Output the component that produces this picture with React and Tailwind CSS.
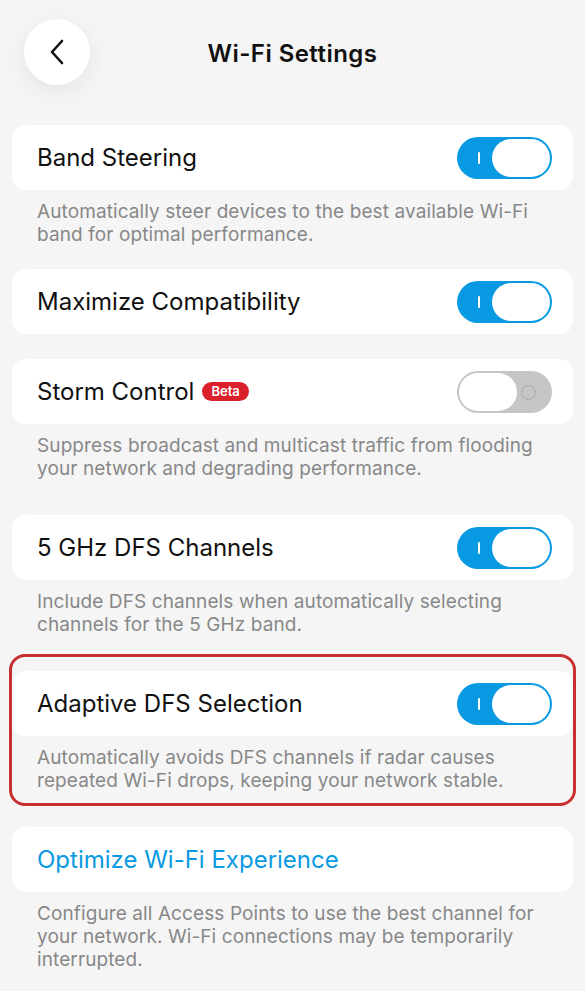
import React, { useState } from "react";

const Toggle = ({ on, onChange }) => (
  <button
    onClick={onChange}
    className={`relative w-[95px] h-[42px] rounded-full shrink-0 ${on ? "bg-[#0899e3]" : "bg-[#c6c6c6]"}`}
    aria-pressed={on}
  >
    {on ? (
      <>
        <span className="absolute left-[21px] top-[15px] w-[2px] h-[12px] bg-white rounded-sm" />
        <span className="absolute right-[2px] top-[2px] w-[58px] h-[38px] rounded-full bg-white" />
      </>
    ) : (
      <>
        <span className="absolute left-[2px] top-[2px] w-[58px] h-[38px] rounded-full bg-white" />
        <span className="absolute left-[64px] top-[14px] w-[15px] h-[15px] rounded-full border-[1.5px] border-[#a8a8a8]" />
      </>
    )}
  </button>
);

const Card = ({ children }) => (
  <div className="h-[65px] bg-white rounded-[14px] flex items-center justify-between pl-[25px] pr-[21px]">
    {children}
  </div>
);

const Desc = ({ children }) => (
  <p className="pt-[10px] pl-[25px] pr-[20px] text-[19px] leading-[23px] tracking-[0.1px] text-[#888888]">
    {children}
  </p>
);

export default function App() {
  const [state, setState] = useState({
    band: true,
    compat: true,
    storm: false,
    dfs: true,
    adaptive: true,
  });
  const flip = k => setState(s => ({ ...s, [k]: !s[k] }));

  return (
    <div
      className="min-h-screen bg-[#f5f5f5] px-3 pb-6 text-[#111111]"
      style={{ fontFamily: "Inter, 'Noto Sans', sans-serif" }}
    >
      {/* Header */}
      <div className="grid grid-cols-[66px_1fr_66px] items-center px-3 pt-[19px]">
        <button className="w-[66px] h-[66px] rounded-full bg-white shadow-[0_6px_24px_rgba(0,0,0,0.07)] flex items-center justify-center">
          <svg width="16" height="26" viewBox="0 0 16 26" fill="none">
            <path d="M13 2L3 13l10 11" stroke="#111" strokeWidth="2.6" strokeLinecap="round" strokeLinejoin="round" />
          </svg>
        </button>
        <h1 className="text-center pt-[3px] text-[24px] font-semibold tracking-[0.45px]">Wi-Fi Settings</h1>
        <div />
      </div>

      {/* Band Steering */}
      <div className="mt-[40px]">
        <Card>
          <span className="text-[24px]">Band Steering</span>
          <Toggle on={state.band} onChange={() => flip("band")} />
        </Card>
        <Desc>Automatically steer devices to the best available Wi-Fi band for optimal performance.</Desc>
      </div>

      {/* Maximize Compatibility */}
      <div className="mt-[23px]">
        <Card>
          <span className="text-[24px]">Maximize Compatibility</span>
          <Toggle on={state.compat} onChange={() => flip("compat")} />
        </Card>
      </div>

      {/* Storm Control */}
      <div className="mt-[25px]">
        <Card>
          <div className="flex items-center gap-[8px]">
            <span className="text-[24px]">Storm Control</span>
            <span className="bg-[#d9202b] text-white text-[13px] font-semibold leading-none rounded-full px-[9px] py-[3px]">
              Beta
            </span>
          </div>
          <Toggle on={state.storm} onChange={() => flip("storm")} />
        </Card>
        <Desc>Suppress broadcast and multicast traffic from flooding your network and degrading performance.</Desc>
      </div>

      {/* 5 GHz DFS */}
      <div className="mt-[35px]">
        <Card>
          <span className="text-[24px]">5 GHz DFS Channels</span>
          <Toggle on={state.dfs} onChange={() => flip("dfs")} />
        </Card>
        <Desc>Include DFS channels when automatically selecting channels for the 5 GHz band.</Desc>
      </div>

      {/* Adaptive DFS - highlighted */}
      <div className="mt-[18px] -mx-[3px] border-[3px] border-[#c7302e] rounded-[16px] pt-[14px] pb-[11px]">
        <Card>
          <span className="text-[24px]">Adaptive DFS Selection</span>
          <Toggle on={state.adaptive} onChange={() => flip("adaptive")} />
        </Card>
        <Desc>Automatically avoids DFS channels if radar causes repeated Wi-Fi drops, keeping your network stable.</Desc>
      </div>

      {/* Optimize */}
      <div className="mt-[21px]">
        <Card>
          <span className="text-[24px] text-[#0a9ae2]">Optimize Wi-Fi Experience</span>
        </Card>
        <Desc>
          Configure all Access Points to use the best channel for your network. Wi-Fi connections may be temporarily interrupted.
        </Desc>
      </div>
    </div>
  );
}
